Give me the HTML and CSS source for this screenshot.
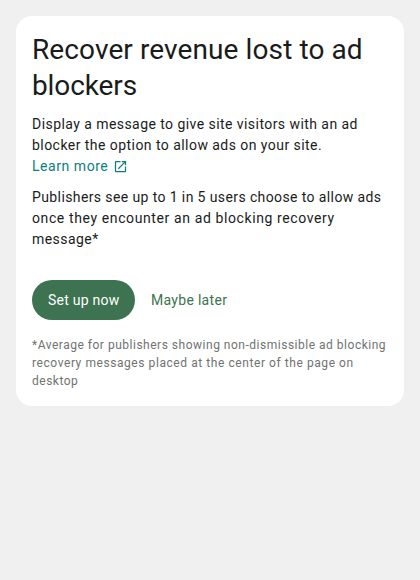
FILE: index.html
```html
<!DOCTYPE html>
<html lang="en">
<head>
<meta charset="utf-8">
<title>Recover revenue lost to ad blockers</title>
<link rel="stylesheet" href="styles.css">
</head>
<body>
<main class="card">
  <h1 class="title"><span class="line track-title">Recover revenue lost to ad</span> <span class="line track-tight">blockers</span></h1>
  <p class="text"><span class="line track-a">Display a message to give site visitors with an ad</span> <span class="line track-b">blocker the option to allow ads on your site.</span> <a class="link" href="#">Learn more<svg class="icon" viewBox="0 0 24 24" aria-hidden="true"><path fill="currentColor" d="M19 19H5V5h7V3H5c-1.11 0-2 .9-2 2v14c0 1.1.89 2 2 2h14c1.1 0 2-.9 2-2v-7h-2v7zM14 3v2h3.59l-9.83 9.83 1.41 1.41L19 6.41V10h2V3h-7z"/></svg></a></p>
  <p class="text"><span class="line track-c">Publishers see up to 1 in 5 users choose to allow ads</span> <span class="line track-d">once they encounter an ad blocking recovery</span> <span class="line track-a">message*</span></p>
  <div class="actions">
    <button class="button primary">Set up now</button>
    <button class="button">Maybe later</button>
  </div>
  <p class="note"><span class="line track-e">*Average for publishers showing non-dismissible ad blocking</span> <span class="line track-f">recovery messages placed at the center of the page on</span> <span class="line track-e">desktop</span></p>
</main>
</body>
</html>
```
FILE: styles.css
```css
* { box-sizing: border-box; }
body {
  margin: 0;
  padding: 16px;
  background: #f0f0f0;
  color: #191c1a;
  font-family: Roboto, "Liberation Sans", sans-serif;
}
.card {
  height: 390px;
  padding: 16px;
  background: #fff;
  border-radius: 16px;
}
.line { display: block; white-space: nowrap; }
.title { margin: 0; font-size: 28px; font-weight: 400; line-height: 36px; }
.text { margin: 10px 0 0; font-size: 14px; line-height: 21px; }
.link {
  display: flex;
  align-items: center;
  color: #0b7f7c;
  letter-spacing: .55px;
  text-decoration: none;
}
.icon { width: 15px; height: 15px; margin-left: 5px; }
.track-title { letter-spacing: .1px; }
.track-tight { letter-spacing: -.1px; }
.track-a { letter-spacing: .44px; }
.track-b { letter-spacing: .45px; }
.track-c { letter-spacing: .39px; }
.track-d { letter-spacing: .61px; }
.track-e { letter-spacing: .51px; }
.track-f { letter-spacing: .57px; }
.actions { display: flex; margin-top: 30px; }
.button {
  height: 40px;
  padding: 0 16px;
  border: 0;
  border-radius: 20px;
  background: none;
  color: #3d7350;
  font: 400 14px/20px Roboto, "Liberation Sans", sans-serif;
  letter-spacing: .3px;
  white-space: nowrap;
}
.primary { width: 103px; background: #3d7350; color: #fff; letter-spacing: .25px; }
.note { margin: 16px 0 0; color: #707371; font-size: 12px; line-height: 18px; }
```
